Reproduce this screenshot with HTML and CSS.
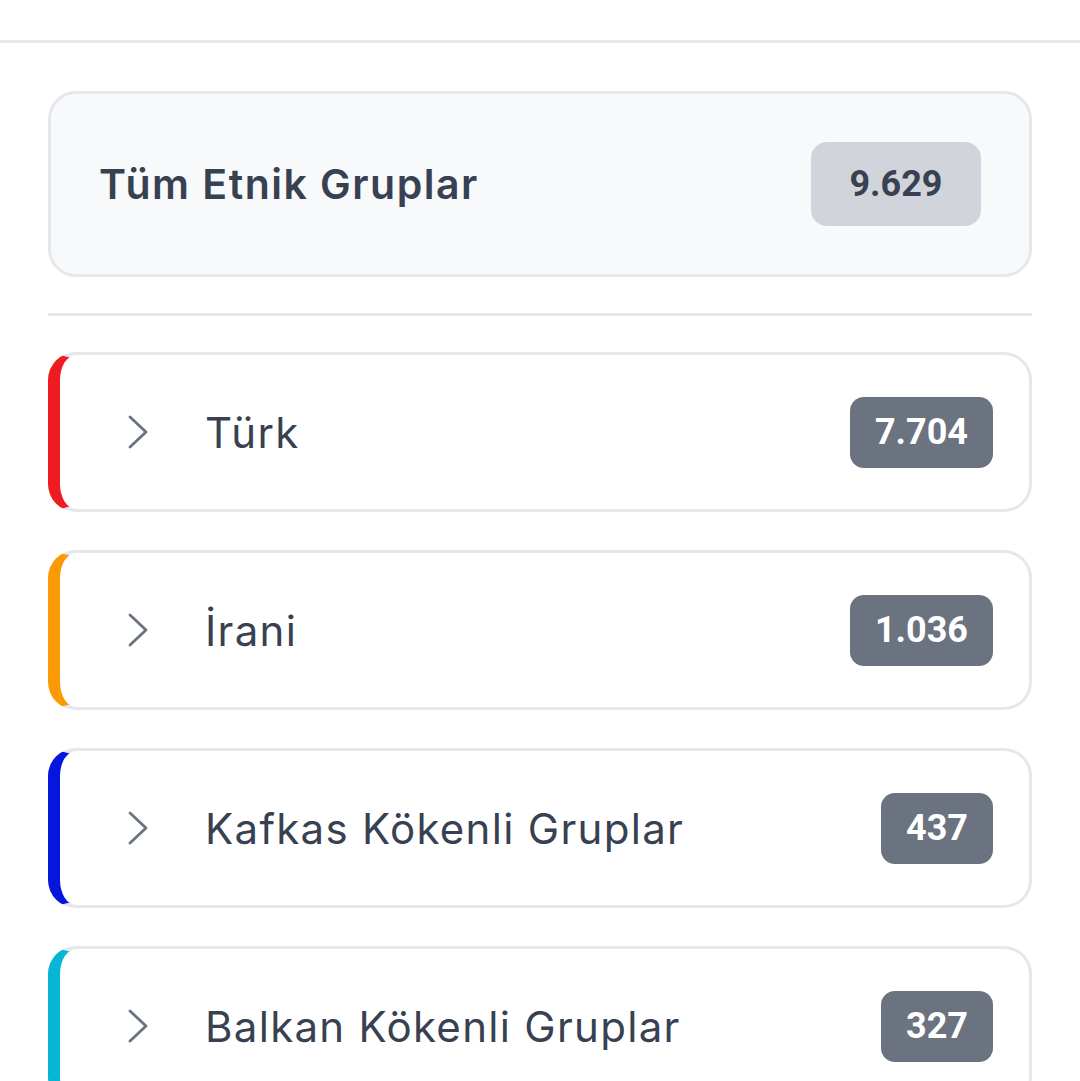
FILE: index.html
```html
<!DOCTYPE html>
<html lang="tr">
<head>
<meta charset="utf-8">
<title>Etnik Gruplar</title>
<link rel="stylesheet" href="styles.css">
</head>
<body>
<header class="topbar"></header>
<main class="content">
  <section class="all-card">
    <span class="all-title">Tüm Etnik Gruplar</span>
    <span class="all-badge">9.629</span>
  </section>
  <hr class="divider">
  <ul class="groups">
    <li class="group group-red">
      <svg class="chev" viewBox="0 0 20 34" width="20" height="34"><path d="M2 2 L18 17 L2 32" fill="none" stroke="#6b7280" stroke-width="2.8" stroke-linecap="round" stroke-linejoin="round"/></svg>
      <span class="group-name">Türk</span>
      <span class="badge">7.704</span>
    </li>
    <li class="group group-orange">
      <svg class="chev" viewBox="0 0 20 34" width="20" height="34"><path d="M2 2 L18 17 L2 32" fill="none" stroke="#6b7280" stroke-width="2.8" stroke-linecap="round" stroke-linejoin="round"/></svg>
      <span class="group-name">İrani</span>
      <span class="badge">1.036</span>
    </li>
    <li class="group group-blue">
      <svg class="chev" viewBox="0 0 20 34" width="20" height="34"><path d="M2 2 L18 17 L2 32" fill="none" stroke="#6b7280" stroke-width="2.8" stroke-linecap="round" stroke-linejoin="round"/></svg>
      <span class="group-name">Kafkas Kökenli Gruplar</span>
      <span class="badge">437</span>
    </li>
    <li class="group group-cyan">
      <svg class="chev" viewBox="0 0 20 34" width="20" height="34"><path d="M2 2 L18 17 L2 32" fill="none" stroke="#6b7280" stroke-width="2.8" stroke-linecap="round" stroke-linejoin="round"/></svg>
      <span class="group-name">Balkan Kökenli Gruplar</span>
      <span class="badge">327</span>
    </li>
  </ul>
</main>
</body>
</html>
```
FILE: styles.css
```css
html, body {
  margin: 0;
  padding: 0;
  background: #ffffff;
  overflow: hidden;
}
body {
  font-family: Inter, "Noto Sans", sans-serif;
  color: #374151;
}
.topbar {
  height: 40px;
  border-bottom: 3px solid #e5e7eb;
}
.content {
  padding: 48px 48px 0 48px;
}
.all-card {
  box-sizing: border-box;
  height: 186px;
  display: flex;
  align-items: center;
  justify-content: space-between;
  padding: 0 48px 0 48px;
  background: #f8f9fb;
  border: 3px solid #e5e7eb;
  border-radius: 28px;
}
.all-title {
  font-size: 41px;
  font-weight: 600;
  color: #374151;
  letter-spacing: 1.5px;
}
.all-badge {
  display: flex;
  align-items: center;
  justify-content: center;
  height: 84px;
  width: 170px;
  box-sizing: border-box;
  background: #d1d5db;
  border-radius: 16px;
  font-family: Roboto, "Liberation Sans", sans-serif;
  font-weight: 700;
  font-size: 36px;
  color: #374151;
}
.divider {
  border: 0;
  height: 3px;
  background: #e5e7eb;
  margin: 36px 0 36px 0;
}
.groups {
  list-style: none;
  margin: 0;
  padding: 0;
  display: flex;
  flex-direction: column;
  gap: 38px;
}
.group {
  box-sizing: border-box;
  height: 160px;
  display: flex;
  align-items: center;
  padding: 0 36px 0 68px;
  border: 3px solid #e5e7eb;
  border-left-width: 12px;
  border-radius: 28px;
  background: #fff;
}
.group-red { border-left-color: #ee1c22; }
.group-orange { border-left-color: #fb9a06; }
.group-blue { border-left-color: #0716dd; }
.group-cyan { border-left-color: #06b6d4; }
.chev {
  flex: none;
  display: block;
}
.group-name {
  flex: 1;
  margin-left: 57px;
  font-size: 42px;
  font-weight: 400;
  letter-spacing: 1.3px;
  color: #374151;
}
.badge {
  display: flex;
  align-items: center;
  height: 71px;
  padding: 0 25px;
  background: #6b7280;
  border-radius: 14px;
  font-family: Roboto, "Liberation Sans", sans-serif;
  font-weight: 700;
  font-size: 36px;
  color: #ffffff;
}
```
